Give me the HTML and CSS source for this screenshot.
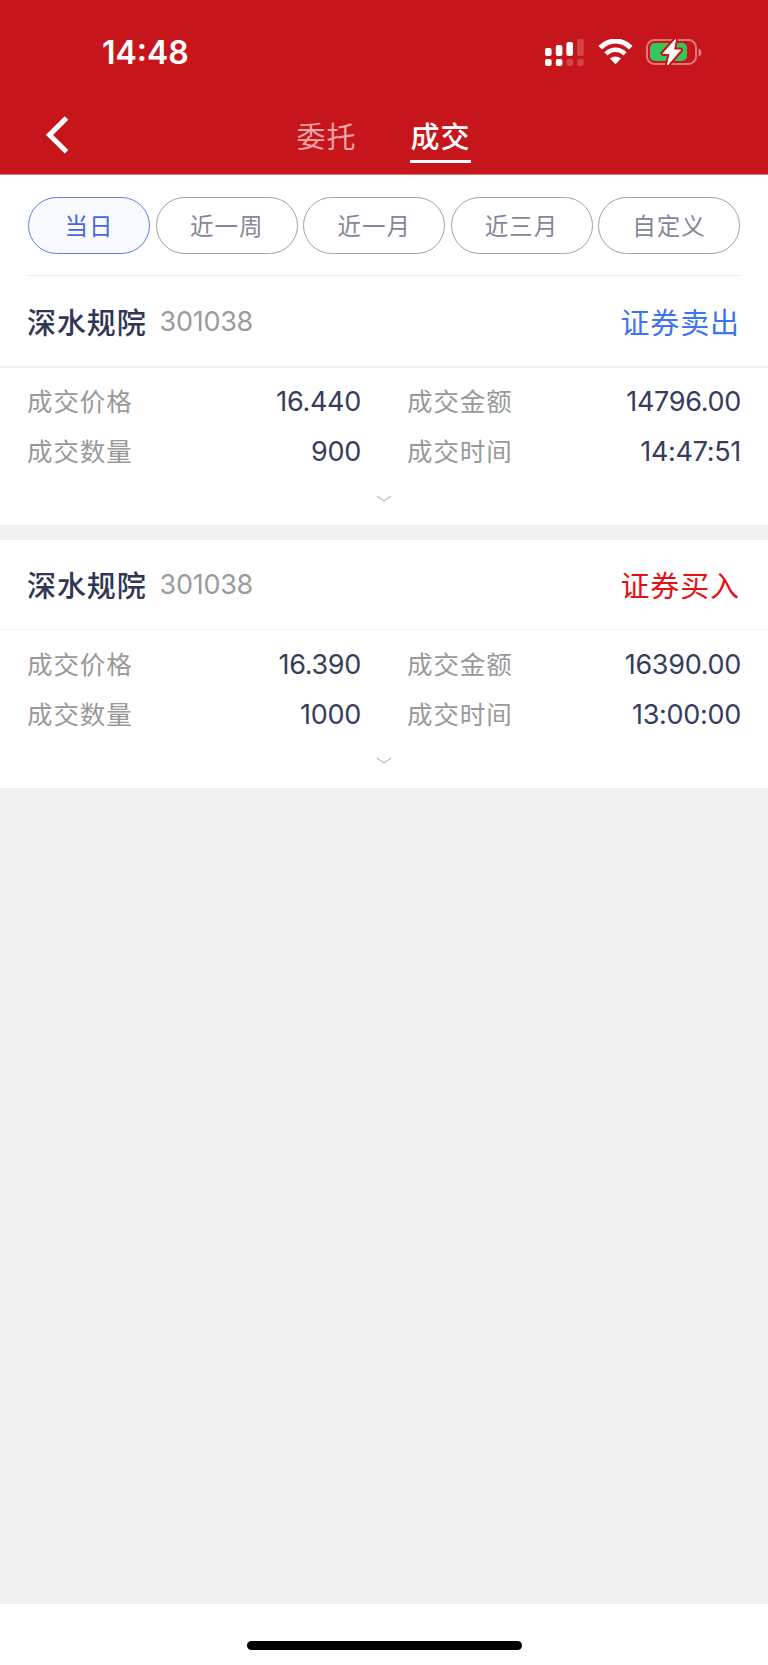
FILE: index.html
```html
<!DOCTYPE html>
<html lang="zh-CN">
<head>
<meta charset="utf-8">
<title>成交</title>
<link rel="stylesheet" href="styles.css">
</head>
<body>
<div class="screen">
  <header class="top">
    <div class="status">
      <span class="clock">14:48</span>
      <div class="status-icons">
        <svg class="signal" width="39" height="27" viewBox="0 0 39 27" fill="#fff">
          <rect x="0" y="9" width="6.6" height="8" rx="2"/>
          <rect x="10.8" y="6" width="6.6" height="11" rx="2"/>
          <rect x="21.4" y="3" width="6.6" height="14" rx="2"/>
          <rect x="32.2" y="0" width="6.6" height="17" rx="2" opacity=".2"/>
          <rect x="0" y="20" width="6.6" height="7" rx="2"/>
          <rect x="10.8" y="20" width="6.6" height="7" rx="2"/>
          <rect x="21.4" y="20" width="6.6" height="7" rx="2" opacity=".2"/>
          <rect x="32.2" y="20" width="6.6" height="7" rx="2" opacity=".2"/>
        </svg>
        <svg class="wifi" width="35" height="26" viewBox="0 0 35 26">
          <path d="M2.200 8.800C11-.2 24-.2 32.800 8.800" fill="none" stroke="#fff" stroke-width="5"/>
          <path d="M7.900 14.900C13.500 9.400 21.500 9.400 27.100 14.900" fill="none" stroke="#fff" stroke-width="4.600"/>
          <path d="M12 19.600C15 16.700 20 16.700 23 19.600L18.300 24.600Q17.500 25.300 16.700 24.600Z" fill="#fff"/>
        </svg>
        <svg class="battery" width="57" height="29" viewBox="0 0 57 29">
          <rect x="1" y="2" width="49" height="24" rx="7.500" fill="none" stroke="#fff" stroke-opacity=".42" stroke-width="2"/>
          <path d="M52.500 10.500Q55.500 11.500 55.500 14.500T52.500 18.500Z" fill="#fff" fill-opacity=".45"/>
          <rect x="4" y="5" width="37" height="18" rx="5" fill="#34c759"/>
          <path d="M29.500 1.500L17 15.500H24L21.500 27L34.500 12H27.500Z" fill="#fff" stroke="#c7161b" stroke-width="5" stroke-linejoin="round" paint-order="stroke"/>
          <path d="M29.500 1.500L17 15.500H24L21.500 27L34.500 12H27.500Z" fill="#fff" stroke="#fff" stroke-width="1" stroke-linejoin="round"/>
        </svg>
      </div>
    </div>
    <nav class="nav">
      <svg class="back" width="23" height="38" viewBox="0 0 23 38"><path d="M20.500 2L3.500 18.900L20.500 35.800" fill="none" stroke="#fff" stroke-width="5"/></svg>
      <div class="tabs">
        <span class="tab">委托</span>
        <span class="tab active">成交</span>
      </div>
    </nav>
  </header>

  <main class="content">
    <section class="filters">
      <span class="pill selected">当日</span>
      <span class="pill">近一周</span>
      <span class="pill">近一月</span>
      <span class="pill">近三月</span>
      <span class="pill">自定义</span>
    </section>

    <article class="deal first">
      <div class="deal-head">
        <span class="name">深水规院</span><span class="code">301038</span><span class="side sell">证券卖出</span>
      </div>
      <div class="rows">
        <span class="label">成交价格</span><span class="value">16.440</span>
        <span class="label">成交金额</span><span class="value">14796.00</span>
        <span class="label">成交数量</span><span class="value">900</span>
        <span class="label">成交时间</span><span class="value time">14:47:51</span>
      </div>
      <svg class="more" width="16" height="8" viewBox="0 0 16 8"><path d="M1 1.200L8 5.700L15 1.200" fill="none" stroke="#b9bbc5" stroke-width="1.300"/></svg>
    </article>

    <article class="deal">
      <div class="deal-head">
        <span class="name">深水规院</span><span class="code">301038</span><span class="side buy">证券买入</span>
      </div>
      <div class="rows">
        <span class="label">成交价格</span><span class="value">16.390</span>
        <span class="label">成交金额</span><span class="value">16390.00</span>
        <span class="label">成交数量</span><span class="value">1000</span>
        <span class="label">成交时间</span><span class="value time">13:00:00</span>
      </div>
      <svg class="more" width="16" height="8" viewBox="0 0 16 8"><path d="M1 1.200L8 5.700L15 1.200" fill="none" stroke="#b9bbc5" stroke-width="1.300"/></svg>
    </article>
  </main>

  <footer class="home"><div class="home-bar"></div></footer>
</div>
</body>
</html>
```
FILE: styles.css
```css
* { box-sizing: border-box; }
body {
  margin: 0;
  background: #f1f1f1;
  font-family: Inter, "Noto Sans CJK SC", sans-serif;
}
svg { display: block; flex: none; }
.screen {
  width: 768px;
  height: 1665px;
  display: flex;
  flex-direction: column;
}

.top {
  height: 175px;
  background: #c7161b;
  border-bottom: 1px solid #e07a7d;
  color: #fff;
}
.status {
  height: 104px;
  padding: 0 65px 0 102px;
  display: flex;
  align-items: center;
  justify-content: space-between;
}
.clock {
  padding-top: 2px;
  font-size: 32px;
  font-weight: 600;
  line-height: 40px;
}
.status-icons { display: flex; align-items: center; }
.signal { margin-right: 14px; }
.wifi { margin-right: 13px; }
.nav {
  height: 70px;
  display: flex;
  padding-left: 46px;
}
.back { margin-top: 12px; }
.tabs {
  display: flex;
  gap: 53px;
  margin-left: 227px;
}
.tab {
  width: 61px;
  height: 59px;
  padding-top: 9px;
  text-align: center;
  font: 400 29px/44px "Noto Sans CJK SC", sans-serif;
  letter-spacing: .9px;
  color: #f2a5a8;
}
.tab.active {
  color: #fff;
  font-weight: 500;
  border-bottom: 3px solid #fff;
}

.content { flex: 1; }
.filters {
  height: 100px;
  padding: 22px 28px 0;
  display: flex;
  gap: 5.5px;
  background: #fff;
}
.pill {
  flex: 142 1 0;
  height: 57px;
  border: 1px solid #9fa1b0;
  border-radius: 29px;
  text-align: center;
  font: 400 23.5px/54px "Noto Sans CJK SC", sans-serif;
  letter-spacing: 1px;
  color: #858799;
}
.pill.selected {
  flex-grow: 122;
  border-color: #5b7fee;
  background: #f8faff;
  color: #4468e4;
}

.deal {
  height: 248px;
  margin-top: 15px;
  background: #fff;
}
.deal.first {
  height: 250px;
  margin-top: 0;
  background: linear-gradient(#ebebee, #ebebee) 27px 0 / 714px 1px no-repeat, #fff;
}
.deal-head {
  height: 90px;
  padding: 0 28px 0 27px;
  display: flex;
  align-items: center;
  border-bottom: 1px solid #f1f1f2;
}
.deal.first .deal-head {
  height: 93px;
  padding-top: 2px;
  border-bottom: 2px solid #efeff0;
}
.name {
  padding-bottom: 2px;
  font: 500 29px/44px "Noto Sans CJK SC", sans-serif;
  letter-spacing: .9px;
  color: #303654;
}
.code {
  margin-left: 13px;
  font-size: 27px;
  letter-spacing: -.3px;
  color: #9b9b9b;
}
.side {
  margin-left: auto;
  padding-bottom: 2px;
  font: 400 29px/44px "Noto Sans CJK SC", sans-serif;
  letter-spacing: .9px;
}
.sell { color: #4073f0; }
.buy { color: #e60f14; }
.rows {
  padding: 9px 27px 0 27px;
  display: grid;
  grid-template-columns: 136px 198px 149px 1fr;
  grid-auto-rows: 50px;
  align-items: center;
}
.deal.first .rows { padding-top: 8px; }
.deal.first .more { margin-top: 19px; }
.rows .label:nth-child(4n+3) { margin-left: 46px; }
.label {
  padding-bottom: 3px;
  font: 400 25.5px/40px "Noto Sans CJK SC", sans-serif;
  letter-spacing: .9px;
  color: #999;
  white-space: nowrap;
}
.value {
  font-size: 27px;
  letter-spacing: -.3px;
  text-align: right;
  color: #363d5c;
}
.more { margin: 18px auto 0; }

.home {
  height: 61px;
  padding-top: 37px;
  background: #fff;
}
.home-bar {
  width: 275px;
  height: 9px;
  margin: 0 auto;
  border-radius: 5px;
  background: #000;
}
```
